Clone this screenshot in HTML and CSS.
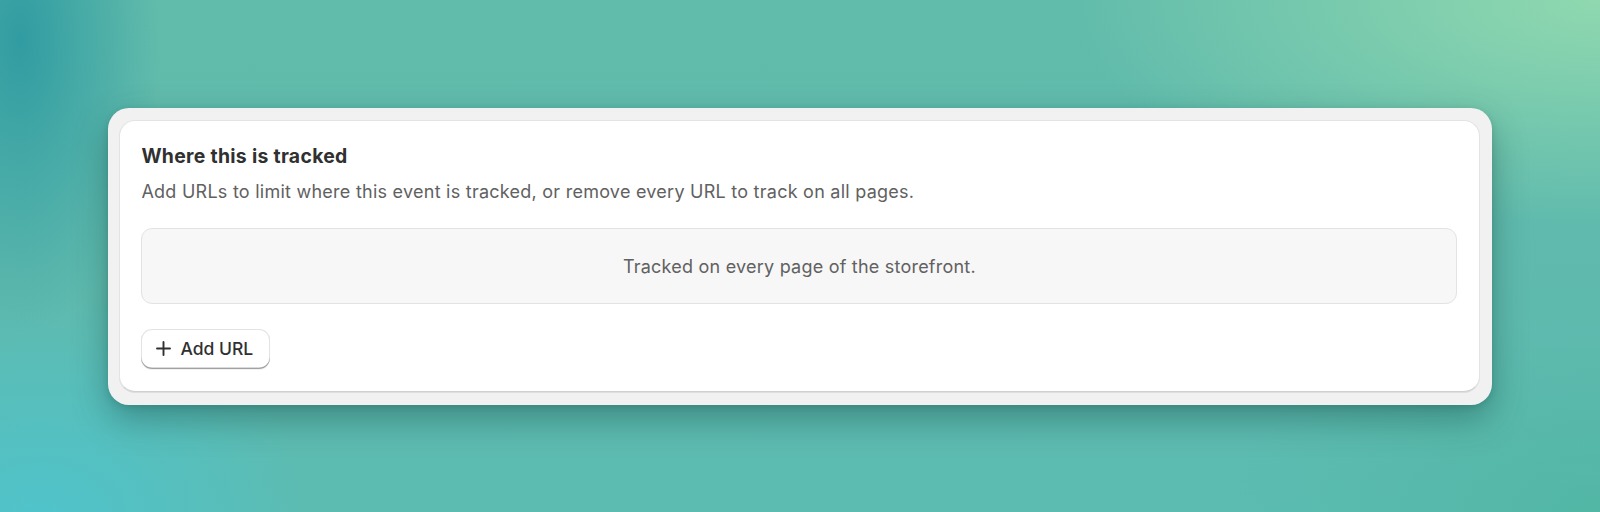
FILE: index.html
```html
<!DOCTYPE html>
<html lang="en">
<head>
<meta charset="utf-8">
<title>Where this is tracked</title>
<link rel="stylesheet" href="styles.css">
</head>
<body>
  <main class="frame">
    <section class="card">
      <div class="card-head">
        <h2 class="title">Where this is tracked</h2>
        <p class="desc">Add URLs to limit where this event is tracked, or remove every URL to track on all pages.</p>
      </div>
      <div class="empty">Tracked on every page of the storefront.</div>
      <div class="actions">
        <button class="btn" type="button">
          <svg class="plus" width="15" height="15" viewBox="0 0 15 15" aria-hidden="true">
            <path d="M7.5 1v13M1 7.5h13" stroke="currentColor" stroke-width="1.9" stroke-linecap="round" fill="none"/>
          </svg>
          <span class="btn-label">Add URL</span>
        </button>
      </div>
    </section>
  </main>
</body>
</html>
```
FILE: styles.css
```css
* { box-sizing: border-box; }
html, body { margin: 0; height: 100%; }
body {
  width: 1600px;
  height: 512px;
  overflow: hidden;
  padding: 108px 108px 0 108px;
  font-family: Inter, "Noto Sans", "Liberation Sans", sans-serif;
  background:
    radial-gradient(ellipse 200px 420px at 20px 40px, rgba(40,150,160,0.85), rgba(40,150,160,0) 70%),
    radial-gradient(ellipse 360px 300px at 40px 520px, rgba(78,196,206,0.9), rgba(78,196,206,0) 75%),
    radial-gradient(ellipse 700px 300px at 1600px 0px, rgba(146,218,176,0.95), rgba(146,218,176,0) 75%),
    radial-gradient(ellipse 500px 260px at 1600px 512px, rgba(78,180,160,0.7), rgba(78,180,160,0) 75%),
    linear-gradient(180deg, #62bcab 0%, #5fbaae 60%, #5cbcb2 100%);
}
.frame {
  background: #f1f1f1;
  border-radius: 21px;
  padding: 12px 12px 13px 11px;
  box-shadow: 0 14px 34px rgba(10, 60, 55, 0.38), 0 2px 6px rgba(10, 60, 55, 0.15);
}
.card {
  background: #ffffff;
  border: 1px solid #e3e3e3;
  border-bottom-color: #d0d0d0;
  border-radius: 16px;
  box-shadow: 0 1px 0 rgba(0,0,0,0.08);
  padding: 21.6px 21.6px 22px 21.4px;
  display: flex;
  flex-direction: column;
}
.card-head {
  display: flex;
  flex-direction: column;
  gap: 8px;
}
.title {
  margin: 0;
  font-size: 19.4px;
  line-height: 27px;
  font-weight: 650;
  letter-spacing: 0.3px;
  color: #303030;
}
.desc {
  margin: 0;
  font-size: 18px;
  line-height: 27px;
  letter-spacing: 0.25px;
  color: #616161;
}
.empty {
  margin-top: 23.5px;
  background: #f7f7f7;
  border: 1px solid #e3e3e3;
  border-radius: 11px;
  padding: 23.5px 16px;
  font-size: 18px;
  line-height: 27px;
  letter-spacing: 0.22px;
  color: #616161;
  text-align: center;
}
.actions {
  margin-top: 25px;
  display: flex;
}
.btn {
  display: inline-flex;
  align-items: center;
  gap: 9px;
  height: 39.5px;
  padding: 0 17px 0 15px;
  border: none;
  border-radius: 11px;
  background: #ffffff;
  color: #303030;
  font-family: inherit;
  font-size: 17.5px;
  font-weight: 500;
  letter-spacing: 0;
  white-space: nowrap;
  box-shadow: inset 0 0 0 1px rgba(0,0,0,0.11), inset 0 -1.5px 0 #b5b5b5, 0 1px 1px rgba(0,0,0,0.06);
}
.plus { flex: none; }
.btn-label { line-height: 27px; }
```
